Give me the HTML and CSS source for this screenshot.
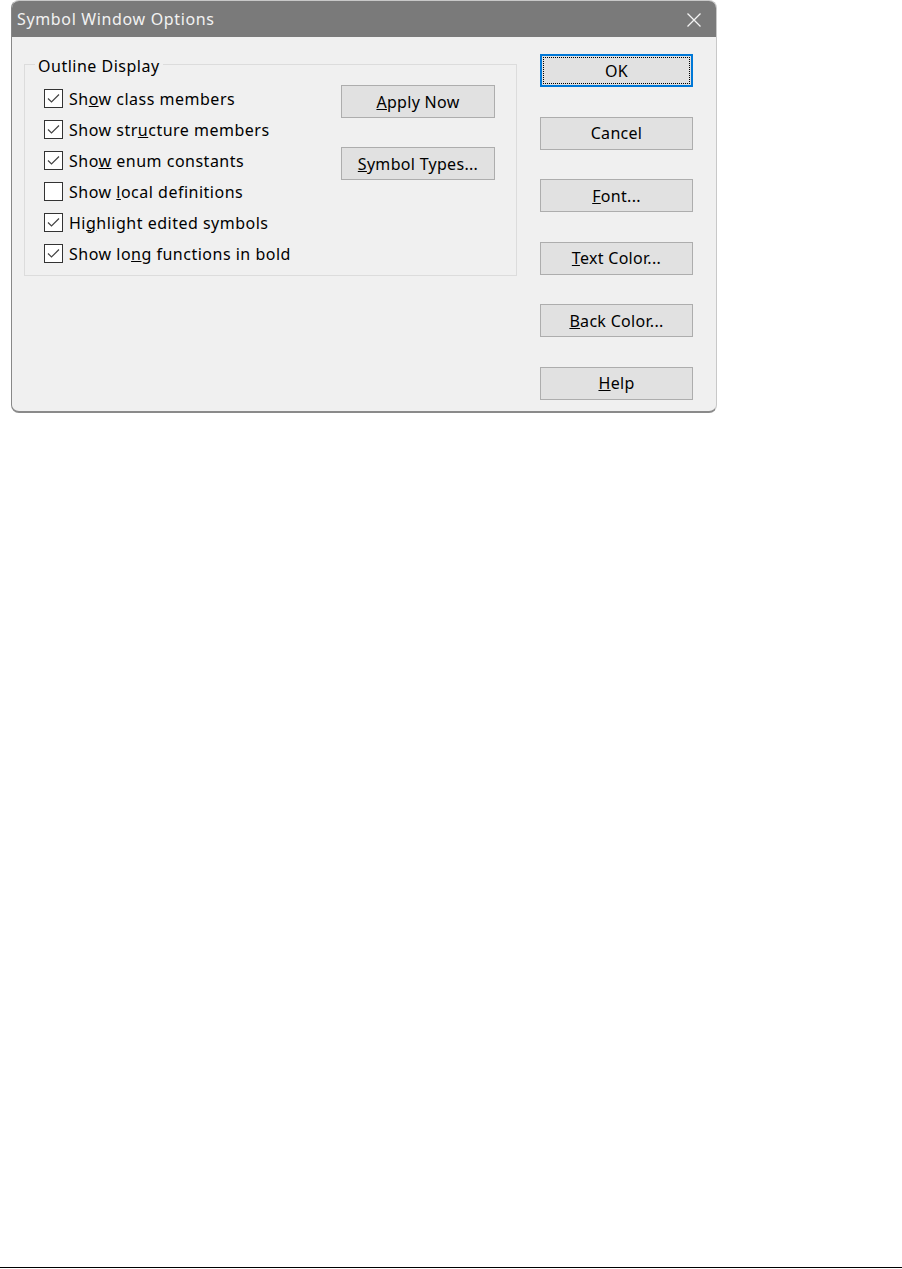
FILE: index.html
```html
<!DOCTYPE html>
<html lang="en">

<head>
    <meta charset="UTF-8">
    <title>Symbol Window Options</title>
    <link rel="stylesheet" href="styles.css">
</head>

<body>

    <div class="window">
        <div class="titlebar">
            <span class="title">Symbol Window Options</span>
            <svg class="close" width="16" height="16" viewBox="0 0 16 16">
                <path d="M1.5 1.5 L14.5 14.5 M14.5 1.5 L1.5 14.5" stroke="#f4f4f4" stroke-width="1.3" fill="none" />
            </svg>
        </div>

        <div class="content">
            <fieldset class="group">
                <legend>Outline Display</legend>
                <div class="group-body">
                    <div class="checks">
                        <label class="check on"><span>Sh<u>o</u>w class members</span></label>
                        <label class="check on"><span>Show str<u>u</u>cture members</span></label>
                        <label class="check on"><span>Sho<u>w</u> enum constants</span></label>
                        <label class="check"><span>Show <u>l</u>ocal definitions</span></label>
                        <label class="check on"><span>Hi<u>g</u>hlight edited symbols</span></label>
                        <label class="check on"><span>Show lo<u>n</u>g functions in bold</span></label>
                    </div>
                    <div class="group-buttons">
                        <button class="btn"><u>A</u>pply Now</button>
                        <button class="btn"><u>S</u>ymbol Types...</button>
                    </div>
                </div>
            </fieldset>

            <div class="buttons">
                <button class="btn default">OK</button>
                <button class="btn">Cancel</button>
                <button class="btn"><u>F</u>ont...</button>
                <button class="btn"><u>T</u>ext Color...</button>
                <button class="btn"><u>B</u>ack Color...</button>
                <button class="btn"><u>H</u>elp</button>
            </div>
        </div>
    </div>

    <div class="rule"></div>

</body>

</html>
```

FILE: styles.css
```css
* {
    margin: 0;
    padding: 0;
    box-sizing: border-box;
}

body {
    height: 1269px;
    display: flex;
    flex-direction: column;
    background: white;
    font-family: "Noto Sans", "Open Sans", sans-serif;
    font-size: 16px;
    letter-spacing: 0.5px;
    color: #000;
}

.window {
    width: 706px;
    height: 413px;
    margin-left: 11px;
    background: #f0f0f0;
    border: 1px solid #c8c8c8;
    border-left-color: #888;
    border-bottom: 2px solid #8a8a8a;
    border-radius: 8px;
    overflow: hidden;
}

.titlebar {
    height: 36px;
    display: flex;
    align-items: center;
    justify-content: space-between;
    padding: 0 14px 0 5px;
    background: #7a7a7a;
    color: #f2f2f2;
    letter-spacing: 0.65px;
}

.titlebar .close {
    margin-top: 1px;
}

.content {
    display: flex;
    gap: 23px;
    padding: 0 0 0 12px;
}

.group {
    width: 493px;
    height: 222px;
    margin-top: 17px;
    border: 1px solid #dcdcdc;
    padding: 0;
}

.group legend {
    margin-left: 10px;
    padding: 0 3px;
    line-height: 20px;
    position: relative;
    top: 2px;
}

.group-body {
    display: flex;
    justify-content: space-between;
    padding: 9px 21px 0 19px;
}

.checks {
    display: flex;
    flex-direction: column;
}

.check {
    height: 31px;
    display: flex;
    align-items: center;
    gap: 6px;
}

.check::before {
    content: "";
    width: 17px;
    height: 17px;
    flex: none;
    border: 1px solid #333;
    background: white;
}

.check.on::before {
    background: white url("data:image/svg+xml,%3Csvg xmlns='http://www.w3.org/2000/svg' width='15' height='15' viewBox='0 0 15 15'%3E%3Cpath d='M2 7.5 L5.5 11 L13 3.5' stroke='%23444' stroke-width='1.2' fill='none'/%3E%3C/svg%3E") no-repeat center;
}

.group-buttons {
    display: flex;
    flex-direction: column;
    gap: 29px;
    padding-top: 2px;
}

.btn {
    width: 154px;
    height: 33px;
    position: relative;
    background: #e1e1e1;
    border: 1px solid #adadad;
    font: inherit;
    letter-spacing: 0.3px;
    color: #000;
}

.buttons {
    display: flex;
    flex-direction: column;
    gap: 29.5px;
    margin-top: 17px;
}

.buttons .btn {
    width: 153px;
}

.btn.default {
    border-color: #0078d7;
    box-shadow: inset 0 0 0 1px #0078d7;
}

.btn.default::after {
    content: "";
    position: absolute;
    inset: 2px;
    border: 1px dotted #000;
}

.rule {
    height: 1px;
    margin-top: auto;
    margin-bottom: 1px;
    background: black;
}
```
